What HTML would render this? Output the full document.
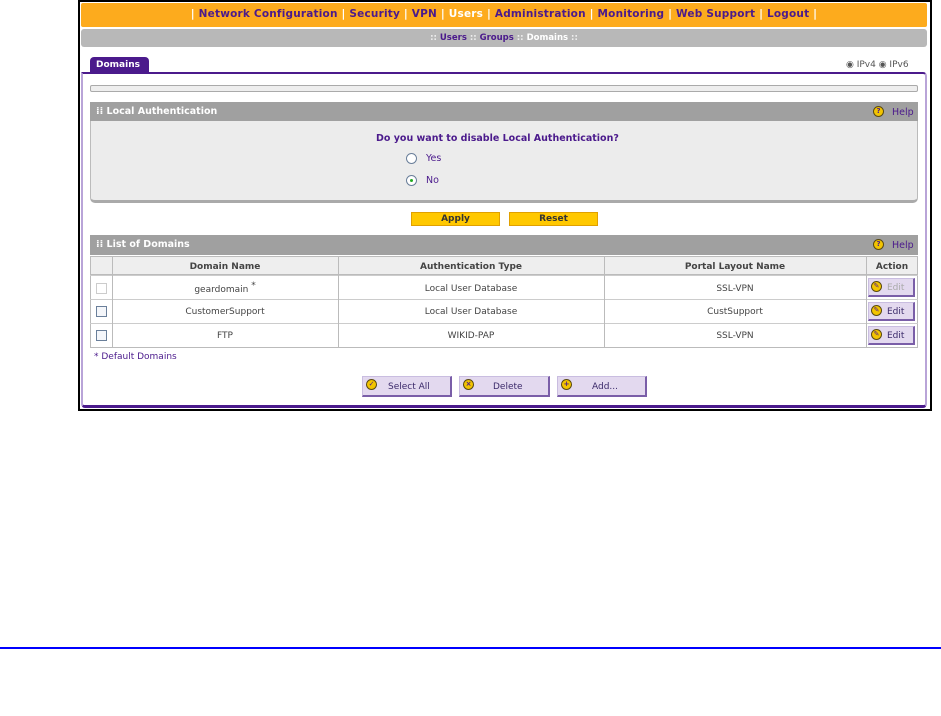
<!DOCTYPE html>
<html><head><meta charset="utf-8"><style>
*{margin:0;padding:0;box-sizing:border-box}
body{width:941px;height:716px;background:#fff;position:relative;font-family:"DejaVu Sans","Liberation Sans",sans-serif;overflow:hidden}
.a{position:absolute}
.b{font-weight:bold}
.pu{color:#4b1a8c}
.t{font-size:9px}
.btn{position:absolute;background:#e3d9ef;border:1px solid #c9bde0;border-right:2px solid #7a5ea8;border-bottom:2px solid #7a5ea8;font-size:9px;color:#3b2a6a}
.ico{position:absolute;width:11px;height:11px;border-radius:50%;background:#f2c400;border:1px solid #5a4a10;font-size:7px;font-weight:bold;line-height:9px;text-align:center;color:#4b1a8c}
.cell{position:absolute;font-size:9px;color:#444;text-align:center}
.cb{position:absolute;width:11px;height:11px;border:1px solid #6a7f9a;background:#f4f6fa}
</style></head><body>
<div class="a" style="left:78px;top:0;width:854px;height:411px;border:2px solid #000"></div>
<div class="a" style="left:81px;top:3px;width:846px;height:24px;background:#fdab1d;border-radius:2px"></div>
<div class="a b" style="left:81px;top:8px;width:846px;text-align:center;color:#4b1a8c;font-size:10.5px;letter-spacing:0.2px;white-space:pre"><span style="color:#fff">|</span> Network Configuration <span style="color:#fff">|</span> Security <span style="color:#fff">|</span> VPN <span style="color:#fff">|</span> <span style="color:#fff">Users</span> <span style="color:#fff">|</span> Administration <span style="color:#fff">|</span> Monitoring <span style="color:#fff">|</span> Web Support <span style="color:#fff">|</span> Logout <span style="color:#fff">|</span></div>
<div class="a" style="left:81px;top:29px;width:846px;height:18px;background:#b8b8b8;border-radius:3px"></div>
<div class="a b" style="left:81px;top:33px;width:846px;text-align:center;font-size:8.5px;color:#4b1a8c;white-space:pre"><span style="color:#eee">::</span> Users <span style="color:#eee">::</span> Groups <span style="color:#eee">::</span> <span style="color:#fff">Domains</span> <span style="color:#eee">::</span></div>
<div class="a" style="left:90px;top:57px;width:59px;height:16px;background:#4b1a8c;border-radius:4px 4px 0 0"></div>
<div class="a b" style="left:96px;top:60px;font-size:9px;color:#fff">Domains</div>
<div class="a" style="left:846px;top:60px;font-size:9px;color:#555">◉ IPv4 ◉ IPv6</div>
<div class="a" style="left:81px;top:72px;width:846px;height:336px;border:2px solid #4b1a8c;border-right-color:#b9a4d8;border-left-color:#b9a4d8;border-radius:0 4px 4px 4px;border-bottom-width:3px;border-bottom-color:#4b1a8c"></div>
<div class="a" style="left:90px;top:85px;width:828px;height:7px;border:1px solid #aaa;background:#eee;border-radius:2px"></div>
<div class="a" style="left:90px;top:102px;width:828px;height:19px;background:#a0a0a0"></div>
<div class="a b" style="left:96px;top:106px;font-size:9.5px;color:#fff">⁞⁞ Local Authentication</div>
<div class="ico" style="left:873px;top:106px">?</div>
<div class="a" style="left:892px;top:107px;font-size:9.5px;color:#4b1a8c">Help</div>
<div class="a" style="left:90px;top:121px;width:828px;height:82px;background:#ececec;border:1px solid #bbb;border-top:none;border-bottom:3px solid #aaa;border-radius:0 0 5px 5px"></div>
<div class="a b" style="left:376px;top:133px;font-size:9.5px;color:#4b1a8c">Do you want to disable Local Authentication?</div>
<div class="a" style="left:406px;top:153px;width:11px;height:11px;border-radius:50%;border:1px solid #6a7f9a;background:#fff"></div>
<div class="a" style="left:426px;top:153px;font-size:9.5px;color:#4b1a8c">Yes</div>
<div class="a" style="left:406px;top:175px;width:11px;height:11px;border-radius:50%;border:1px solid #6a7f9a;background:#fff"><div style="margin:3px;width:3px;height:3px;background:#2a2;border-radius:50%"></div></div>
<div class="a" style="left:426px;top:175px;font-size:9.5px;color:#4b1a8c">No</div>
<div class="a b" style="left:411px;top:212px;width:89px;height:14px;background:#ffc800;border:1px solid #e0a000;font-size:9px;text-align:center;color:#333;line-height:12px">Apply</div>
<div class="a b" style="left:509px;top:212px;width:89px;height:14px;background:#ffc800;border:1px solid #e0a000;font-size:9px;text-align:center;color:#333;line-height:12px">Reset</div>
<div class="a" style="left:90px;top:235px;width:828px;height:20px;background:#a0a0a0"></div>
<div class="a b" style="left:96px;top:239px;font-size:9.5px;color:#fff">⁞⁞ List of Domains</div>
<div class="ico" style="left:873px;top:239px">?</div>
<div class="a" style="left:892px;top:240px;font-size:9.5px;color:#4b1a8c">Help</div>
<div class="a" style="left:90px;top:256px;width:828px;height:92px;border:1px solid #bbb;background:#fff"></div>
<div class="a" style="left:90px;top:256px;width:828px;height:19px;background:#eee;border:1px solid #bbb"></div>
<div class="a" style="left:90px;top:299px;width:828px;height:1px;background:#ccc"></div>
<div class="a" style="left:90px;top:323px;width:828px;height:1px;background:#ccc"></div>
<div class="a" style="left:90px;top:275px;width:828px;height:1px;background:#ccc"></div>
<div class="a" style="left:112px;top:256px;width:1px;height:92px;background:#bbb"></div>
<div class="a" style="left:338px;top:256px;width:1px;height:92px;background:#bbb"></div>
<div class="a" style="left:604px;top:256px;width:1px;height:92px;background:#bbb"></div>
<div class="a" style="left:866px;top:256px;width:1px;height:92px;background:#bbb"></div>
<div class="cell b pu" style="left:112px;top:262px;width:226px">Domain Name</div>
<div class="cell b pu" style="left:338px;top:262px;width:266px">Authentication Type</div>
<div class="cell b pu" style="left:604px;top:262px;width:262px">Portal Layout Name</div>
<div class="cell b pu" style="left:866px;top:262px;width:52px">Action</div>
<div class="cb" style="left:96px;top:283px;border-color:#ccc;background:#fff"></div>
<div class="cb" style="left:96px;top:306px"></div>
<div class="cb" style="left:96px;top:330px"></div>
<div class="cell" style="left:112px;top:281px;width:226px">geardomain <span style="vertical-align:4px">*</span></div>
<div class="cell" style="left:112px;top:307px;width:226px">CustomerSupport</div>
<div class="cell" style="left:112px;top:331px;width:226px">FTP</div>
<div class="cell" style="left:338px;top:284px;width:266px">Local User Database</div>
<div class="cell" style="left:338px;top:307px;width:266px">Local User Database</div>
<div class="cell" style="left:338px;top:331px;width:266px">WIKID-PAP</div>
<div class="cell" style="left:604px;top:284px;width:262px">SSL-VPN</div>
<div class="cell" style="left:604px;top:307px;width:262px">CustSupport</div>
<div class="cell" style="left:604px;top:331px;width:262px">SSL-VPN</div>
<div class="btn" style="left:868px;top:278px;width:47px;height:19px;color:#aaa;padding:4px 0 0 18px">Edit</div>
<div class="btn" style="left:868px;top:302px;width:47px;height:19px;padding:4px 0 0 18px">Edit</div>
<div class="btn" style="left:868px;top:326px;width:47px;height:19px;padding:4px 0 0 18px">Edit</div>
<div class="ico" style="left:871px;top:281px">✎</div><div class="ico" style="left:871px;top:305px">✎</div><div class="ico" style="left:871px;top:329px">✎</div>
<div class="a" style="left:94px;top:352px;font-size:9px;color:#4b1a8c">* Default Domains</div>
<div class="btn" style="left:362px;top:376px;width:90px;height:21px;padding:5px 0 0 25px">Select All</div>
<div class="btn" style="left:459px;top:376px;width:91px;height:21px;padding:5px 0 0 33px">Delete</div>
<div class="btn" style="left:557px;top:376px;width:90px;height:21px;padding:5px 0 0 34px">Add...</div>
<div class="ico" style="left:366px;top:379px">✓</div><div class="ico" style="left:463px;top:379px">×</div><div class="ico" style="left:561px;top:379px">+</div>
<div class="a" style="left:0;top:647px;width:941px;height:2px;background:#00f"></div>
</body></html>
